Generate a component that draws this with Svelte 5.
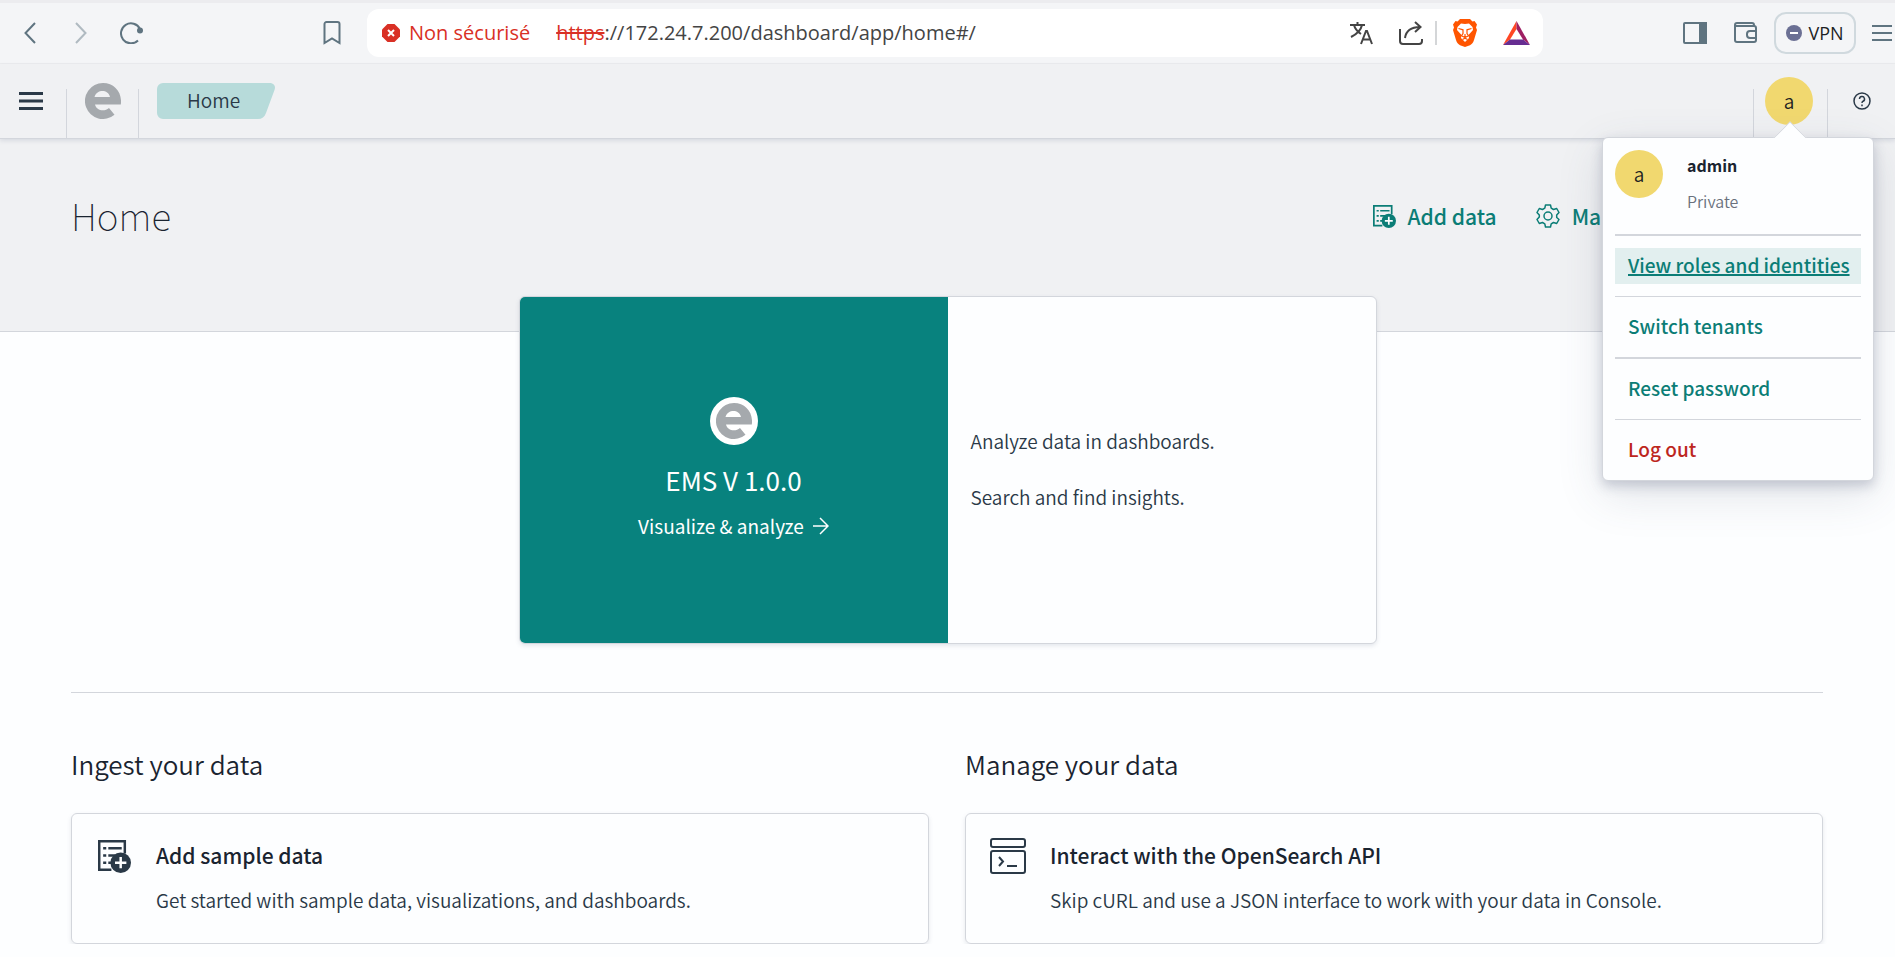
<script>
  const menu = ['Switch tenants', 'Reset password'];
</script>

{#snippet logo()}
  <svg class="logo" viewBox="0 0 36 36" aria-hidden="true">
    <path fill="#a5a9ad" fill-rule="evenodd" d="M18 0a18 18 0 1 0 11.500 31.800l-5.500-6.800c-4.700 4.300-12.800 2.500-14-3.500H35.800C37.500 9.500 29.500 0 18 0ZM9.500 14c2.500-7.900 13.500-7.900 15.500 0Z" />
  </svg>
{/snippet}

{#snippet listAdd()}
  <svg class="list-add" viewBox="0 0 32 32" aria-hidden="true" fill="none" stroke="currentColor" stroke-width="2.400">
    <path d="M26 13V1.200H1.200v27.600H13" />
    <path d="M5 8h3m2 0h13M5 15h3m2 0h7M5 22h3m2 0h3" />
    <circle cx="22" cy="22" r="10" fill="currentColor" stroke="none" />
    <path d="M22 16.500v11m-5.500-5.500h11" stroke="#fdfeff" />
  </svg>
{/snippet}

<div class="browser">
  <div class="nav-tools">
    <button aria-label="Back"><svg width="12" height="22" viewBox="0 0 12 22"><path d="m11 1-9.500 10L11 21" /></svg></button>
    <button aria-label="Forward" class="faded"><svg width="12" height="22" viewBox="0 0 12 22"><path d="m1 1 9.500 10L1 21" /></svg></button>
    <button aria-label="Reload"><svg width="24" height="22" viewBox="0 0 24 22"><path d="M18 18.500A10 10 0 1 1 20 7" /><circle cx="20" cy="8.500" r="3" fill="#5f7480" stroke="none" /></svg></button>
    <button aria-label="Bookmark" class="bookmark"><svg width="18" height="24" viewBox="0 0 18 24"><path d="M1.500 22V3a2 2 0 0 1 2-2h11a2 2 0 0 1 2 2v19L9 17.500Z" /></svg></button>
  </div>
  <div class="address">
    <svg width="18" height="18" viewBox="0 0 18 18" aria-hidden="true"><path fill="#d93025" d="M5.500 0h7L18 5.500v7L12.500 18h-7L0 12.500v-7Z" /><path d="m6 6 6 6m0-6-6 6" stroke="#fff" stroke-width="2" /></svg>
    <span class="warn">Non sécurisé</span>
    <span class="url"><s>https</s>://172.24.7.200/dashboard/app/home#/</span>
    <div class="address-tools">
      <svg width="23" height="24" viewBox="0 0 23 24" aria-hidden="true" fill="none" stroke="#444" stroke-width="2"><path d="M0 4h15M7.500 1v3M12 4c-1 5-5 9-11 12M4 4c1 4 4 7 7 9" /><path d="m11 23 5-13h1l5 13M13 18.500h8" /></svg>
      <svg width="24" height="24" viewBox="0 0 24 24" aria-hidden="true" fill="none" stroke="#444" stroke-width="2"><path d="M1 8v12a3 3 0 0 0 3 3h16a3 3 0 0 0 3-3v-2M6 17C7 10 12 6 21 6M16 1l5.500 5-5.500 5" /></svg>
      <span class="bar"></span>
      <svg class="brave" width="24" height="28" viewBox="0 0 24 28" aria-hidden="true"><path fill="#ff5500" d="m7 0-2.500 2.500-2-.500L0 5.500l1 3L0 11l3 10c1 3 2 4 4 5.200L12 28l5-1.800c2-1.200 3-2.200 4-5.200l3-10-1-2.500 1-3L21.500 2l-2 .500L17 0Z" /><path fill="#fff" d="M8 4.500 12 5l4-.500L19.500 8l.500 3-4.500 5 .500 3-4 4-4-4 .500-3L4 11l.500-3Z" /><path fill="none" stroke="#ff5500" stroke-width="1.200" d="m5.500 9.500 4.500 1.300v3.700l-1.500 2.200 3.500 1.800 3.500-1.800-1.500-2.200v-3.700l4.500-1.300M12 15v3M9.500 20.500l2.500-1.300 2.500 1.300" /></svg>
      <svg width="27" height="24" viewBox="0 0 27 24" aria-hidden="true"><path fill="#ff4724" d="M13.500 0v8L7 18.500 0 24Z" /><path fill="#9e1f63" d="M13.500 0v8L20 18.500l7 5.500Z" /><path fill="#662d91" d="m0 24 7-5.500h13l7 5.500Z" /></svg>
    </div>
  </div>
  <div class="window-tools">
    <button aria-label="Sidebar"><svg width="24" height="22" viewBox="0 0 24 22"><rect x="1" y="1" width="22" height="20" rx="1" /><path fill="#5f7480" d="M17 1h6v20h-6z" /></svg></button>
    <button aria-label="Wallet"><svg width="24" height="22" viewBox="0 0 24 22"><path d="M20 4V3a2 2 0 0 0-2-2H3a2 2 0 0 0-2 2v15a2 2 0 0 0 2 2h17a2 2 0 0 0 2-2V6a2 2 0 0 0-2-2H2M22 9h-6a3 3 0 0 0-3 3v1a3 3 0 0 0 3 3h6" /></svg></button>
    <button class="vpn"><svg width="16" height="16" viewBox="0 0 16 16" aria-hidden="true"><circle cx="8" cy="8" r="8" fill="#6b7094" stroke="none" /><path d="M4 8h8" stroke="#fff" /></svg>VPN</button>
    <button aria-label="Browser menu"><svg width="20" height="16" viewBox="0 0 20 16"><path d="M0 1h20M0 8h20M0 15h20" /></svg></button>
  </div>
</div>

<header>
  <button class="burger" aria-label="Toggle navigation"><svg width="24" height="18" viewBox="0 0 24 18"><path d="M0 1.500h24M0 9h24M0 16.500h24" stroke="#2a3947" stroke-width="3" /></svg></button>
  <a class="brand" href="#home" aria-label="EMS">{@render logo()}</a>
  <a class="crumb" href="#home">
    <svg viewBox="0 0 118 36" aria-hidden="true"><path fill="#b7dbda" d="M6 0h106c5 0 7 3 5.500 7l-8.500 23c-1.500 4-4 6-8 6H6a6 6 0 0 1-6-6V6a6 6 0 0 1 6-6Z" /></svg>
    <span>Home</span>
  </a>
  <div class="account">
    <button class="avatar">a</button>
    <div class="popover">
      <div class="who">
        <span class="avatar">a</span>
        <div><strong>admin</strong><small>Private</small></div>
      </div>
      <hr />
      <a class="item active" href="#roles">View roles and identities</a>
      {#each menu as label}
        <hr />
        <a class="item" href="#account">{label}</a>
      {/each}
      <hr />
      <a class="item danger" href="#logout">Log out</a>
    </div>
  </div>
  <button class="help" aria-label="Help"><svg width="18" height="18" viewBox="0 0 18 18" fill="none" stroke="#2a3947" stroke-width="1.500"><circle cx="9" cy="9" r="8" /><path d="M6.500 7a2.500 2.500 0 1 1 3.500 2.300c-.700.300-1 .700-1 1.700M9 12.500v1.700" /></svg></button>
</header>

<main>
  <section class="hero">
    <h1>Home</h1>
    <nav>
      <a href="#add">{@render listAdd()}Add data</a>
      <a href="#manage"><svg width="24" height="24" viewBox="0 0 24 24" aria-hidden="true" fill="none" stroke="currentColor" stroke-width="1.500"><path stroke-linejoin="round" d="M9.500 1h5l.700 3.200 2.300 1.300 3.200-1L23 8.500 20.700 11v2.500L23 15.500l-2.300 4-3.200-1-2.300 1.300-.700 3.200h-5l-.700-3.200-2.300-1.300-3.200 1L1 15.500 3.300 13v-2L1 8.500l2.300-4 3.200 1 2.300-1.300Z" /><circle cx="12" cy="12" r="4" /></svg>Manage</a>
    </nav>
  </section>

  <article class="solution">
    <div class="pitch">
      <span class="disc">{@render logo()}</span>
      <h2>EMS V 1.0.0</h2>
      <a href="#analyze">Visualize &amp; analyze <svg width="16" height="18" viewBox="0 0 16 18" aria-hidden="true" fill="none" stroke="#fff" stroke-width="1.500"><path d="M0 9h15M7 1l8 8-8 8" /></svg></a>
    </div>
    <div class="points">
      <p>Analyze data in dashboards.</p>
      <p>Search and find insights.</p>
    </div>
  </article>

  <div class="columns">
    <section>
      <h2>Ingest your data</h2>
      <article class="card">
        <span class="icon">{@render listAdd()}</span>
        <div><h3>Add sample data</h3><p>Get started with sample data, visualizations, and dashboards.</p></div>
      </article>
    </section>
    <section>
      <h2>Manage your data</h2>
      <article class="card">
        <span class="icon"><svg width="36" height="36" viewBox="0 0 36 36" aria-hidden="true" fill="none" stroke="currentColor" stroke-width="2"><rect x="1" y="1" width="34" height="8" rx="2" /><rect x="1" y="13" width="34" height="22" rx="2" /><path d="m9 19 4 4.500L9 28M17 28h10" /></svg></span>
        <div><h3>Interact with the OpenSearch API</h3><p>Skip cURL and use a JSON interface to work with your data in Console.</p></div>
      </article>
    </section>
  </div>
</main>

<style>
  :global(body) { background: #fdfeff; color: #2a3947; font-family: "Noto Sans CJK SC", "Noto Sans", sans-serif; font-size: 19px; font-weight: 350; line-height: 36px; }
  * { box-sizing: border-box; }
  svg { display: block; flex: none; }
  h1, h2, h3, p { margin: 0; }
  a { color: inherit; text-decoration: none; }
  button { font: inherit; color: inherit; background: none; border: 0; padding: 0; display: flex; align-items: center; justify-content: center; }

  .browser { display: flex; align-items: center; height: 64px; background: #f4f5f7; border-top: 3px solid #ececef; border-bottom: 1px solid #ebecee; padding: 6px 3px 6px 24px; font-family: "Open Sans", sans-serif; font-size: 20px; font-weight: 400; }
  .nav-tools { display: flex; align-items: center; width: 343px; gap: 39px; }
  .nav-tools svg, .window-tools svg { fill: none; stroke: #5f7480; stroke-width: 2; }
  .nav-tools button + button + button { margin-left: -6px; }
  .faded { opacity: 0.45; }
  .nav-tools .bookmark { margin-left: auto; margin-right: 26px; }
  .address { display: flex; align-items: center; flex: 1; max-width: 1176px; height: 48px; padding: 0 13px 0 15px; background: #fff; border-radius: 12px; }
  .warn { color: #d93025; margin-left: 9px; }
  .url { color: #444; margin-left: 26px; }
  .url s { color: #d93025; }
  .address-tools { display: flex; align-items: center; margin-left: auto; }
  .address-tools svg + svg { margin-left: 26px; }
  .bar { width: 2px; height: 24px; margin: 0 16px 0 12px; background: #d4d6d8; }
  .window-tools { display: flex; align-items: center; gap: 16px; margin-left: auto; }
  .window-tools button:first-child { margin-right: 11px; }
  .window-tools .vpn { width: 82px; height: 42px; border: 2px solid #d0d9de; border-radius: 12px; gap: 6px; color: #1d1f25; font-size: 18px; }

  header { display: flex; align-items: center; height: 75px; position: relative; z-index: 2; background: #f0f1f3; border-bottom: 1px solid #d3d6dc; box-shadow: 0 2px 4px rgba(90, 100, 130, 0.15); }
  header > * { height: 49px; align-self: flex-end; }
  .burger { width: 67px; padding: 0 5px 24px 0; align-items: flex-end; }
  .burger, .brand, .account { border-right: 1px solid #d3d6dc; }
  header .burger svg { margin-bottom: 4px; }
  .brand { width: 72px; display: flex; justify-content: center; }
  .logo { width: 36px; height: 36px; }
  .brand .logo { margin-top: -6px; }
  .crumb { display: grid; margin-left: 18px; height: 55px; align-items: start; }
  .crumb > * { grid-area: 1 / 1; width: 118px; height: 36px; }
  .crumb span { padding-left: 30px; line-height: 34px; }
  .account { margin-left: auto; width: 75px; position: relative; border-left: 1px solid #d3d6dc; display: flex; justify-content: center; padding-right: 3px; }
  .avatar { width: 48px; height: 48px; border-radius: 50%; background: #f1d86f; color: #222; display: flex; align-items: center; justify-content: center; flex: none; line-height: 44px; }
  .account > .avatar { margin-top: -12px; }
  .help { width: 67px; padding-bottom: 26px; }
  .popover { position: absolute; top: 48px; right: -47px; width: 272px; padding: 12px; background: #fdfeff; border: 1px solid #d3d6dc; border-radius: 6px; box-shadow: 0 5px 12px rgba(70, 80, 110, 0.25), 0 14px 45px rgba(70, 80, 110, 0.15); }
  .popover::before { content: ""; position: absolute; top: -12px; right: 71px; width: 23px; height: 23px; transform: rotate(45deg); background: #fdfeff; border: 1px solid #d3d6dc; border-right: 0; border-bottom: 0; clip-path: polygon(0 0, 100% 0, 0 100%); }
  .who { display: flex; gap: 24px; padding-bottom: 15px; }
  .who strong, .who small { display: block; font-size: 16px; }
  .who div { margin-top: -3px; }
  .who strong { color: #1a2430; }
  .who small { color: #6a717d; }
  hr { border: 0; height: 1px; background: #d3d6dc; margin: 0 0 12px; }
  hr:nth-of-type(odd) { height: 2px; }
  .item { display: block; padding: 0 13px 3px; margin-bottom: 12px; color: #0b7d76; font-weight: 500; line-height: 33px; white-space: nowrap; }
  .item:last-child { margin-bottom: 0; }
  .active { background: #e2efef; text-decoration: underline; text-decoration-thickness: 2px; }
  .danger { color: #bd271e; }

  .hero { display: flex; justify-content: space-between; align-items: flex-start; height: 193px; background: #f0f1f3; border-bottom: 1px solid #d3d6dc; padding: 54px 245px 0 71px; }
  h1 { color: #1a2430; font-size: 37px; line-height: 44px; font-weight: 100; }
  nav { display: flex; gap: 39px; line-height: 46px; color: #0b7d76; font-weight: 500; font-size: 21px; }
  nav a { display: flex; align-items: center; gap: 12px; }
  .list-add { width: 23px; height: 23px; }
  .solution { display: grid; grid-template-columns: 1fr 1fr; width: 858px; max-width: 90%; min-height: 348px; margin: -36px auto 48px; position: relative; z-index: 1; background: #fdfeff; border: 1px solid #d3d6dc; border-radius: 6px; box-shadow: 0 2px 4px rgba(90, 100, 130, 0.15); overflow: hidden; }
  .pitch { background: #08827e; color: #fff; display: flex; flex-direction: column; align-items: center; justify-content: center; }
  .disc { width: 48px; height: 48px; border-radius: 50%; background: #fff; padding: 6px; }
  h2 { font-size: 26px; line-height: 34px; font-weight: 350; color: #1a2430; }
  .pitch h2 { color: #fff; font-weight: 400; margin: 18px 0 11px; }
  .pitch a { display: flex; align-items: center; gap: 9px; font-weight: 400; }
  .points { display: flex; flex-direction: column; justify-content: center; gap: 20px; padding: 0 0 2px 23px; }
  .columns { display: grid; grid-template-columns: 1fr 1fr; gap: 36px; margin: 0 72px 0 71px; border-top: 1px solid #d3d6dc; padding-top: 54px; }
  .card { display: flex; gap: 24px; margin-top: 32px; min-height: 131px; padding: 24px; border: 1px solid #d3d6dc; border-radius: 6px; box-shadow: 0 2px 4px rgba(90, 100, 130, 0.15); }
  .icon { width: 36px; height: 36px; display: flex; align-items: center; justify-content: center; }
  .icon .list-add { width: 33px; height: 33px; }
  h3 { font-size: 21px; line-height: 34px; font-weight: 500; color: #1a2430; }
  .card p { margin-top: 10px; }
</style>
